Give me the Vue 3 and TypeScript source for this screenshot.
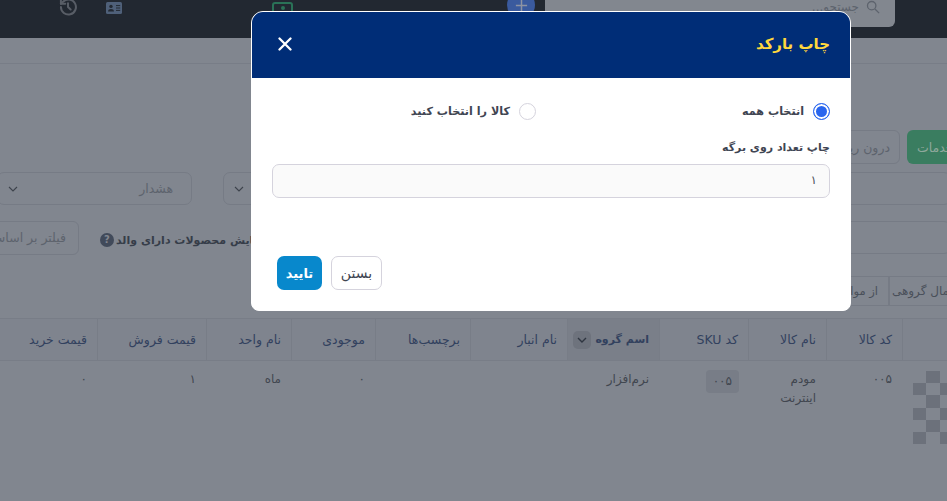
<script setup lang="ts">
interface Col { title: string; value?: string; sorted?: boolean }
const columns: Col[] = [
  { title: '' },
  { title: 'کد کالا', value: '۰۰۵' },
  { title: 'نام کالا', value: 'مودم اینترنت' },
  { title: 'کد SKU' },
  { title: 'اسم گروه', value: 'نرم‌افزار', sorted: true },
  { title: 'نام انبار' },
  { title: 'برچسب‌ها' },
  { title: 'موجودی', value: '۰' },
  { title: 'نام واحد', value: 'ماه' },
  { title: 'قیمت فروش', value: '۱' },
  { title: 'قیمت خرید', value: '۰' }
]
const checker: boolean[] = Array.from({ length: 24 }, (_, i) => (Math.floor(i / 4) + i % 4) % 2 === 1)
</script>

<template>
  <div class="page">
    <header class="topbar">
      <svg class="ico-history" viewBox="0 0 24 24" fill="none" stroke="#585d66" stroke-width="2.4" stroke-linecap="round" stroke-linejoin="round">
        <path d="M3.5 12a9 9 0 1 0 2.8-6.5L3.5 8.2" />
        <path d="M3.5 3v5.2h5.2" />
        <path d="M12 7.5V12l3.2 3" />
      </svg>
      <svg class="ico-card" viewBox="0 0 16 12">
        <rect width="16" height="12" rx="1.5" fill="#4f6079" />
        <circle cx="5" cy="4.4" r="1.7" fill="#232932" />
        <path d="M2 9.6c0-1.8 1.4-2.6 3-2.6s3 .8 3 2.6z" fill="#232932" />
        <path d="M10 3.6h4.2M10 6h4.2M10 8.4h4.2" stroke="#232932" stroke-width="1" />
      </svg>
      <span class="ico-green"><i></i></span>
      <span class="ico-plus">
        <svg viewBox="0 0 16 16" fill="none" stroke="#8d93a3" stroke-width="1.6"><path d="M8 2v12M2 8h12" /></svg>
      </span>
      <div class="search">
        <span class="search-text">جستجو...</span>
        <svg viewBox="0 0 16 16" fill="none" stroke="#5d636d" stroke-width="1.5"><circle cx="6.5" cy="6.5" r="4.8" /><path d="M10.2 10.2 15 15" /></svg>
      </div>
    </header>

    <div class="subbar"></div>

    <div class="tool-row first">
      <button class="ghost out">درون ریزی</button>
      <button class="green">خدمات</button>
    </div>

    <div class="tool-row second">
      <div class="select warn"><span>هشدار</span><svg viewBox="0 0 12 12"><path d="M2 4l4 4 4-4" /></svg></div>
      <div class="select other"><svg viewBox="0 0 12 12"><path d="M2 4l4 4 4-4" /></svg></div>
      <div class="field"></div>
    </div>

    <div class="tool-row third">
      <button class="ghost filter">فیلتر بر اساس</button>
      <span class="parent-help">?</span>
      <span class="parent-label">نمایش محصولات دارای والد</span>
      <div class="field"></div>
    </div>

    <div class="tabs">
      <span class="tab wide">اعمال گروهی</span>
      <span class="tab">از موارد انتخابی</span>
    </div>

    <div class="grid">
      <div v-for="(c, i) in columns" :key="'h' + i" class="th" :class="{ sorted: c.sorted }">
        <span>{{ c.title }}</span>
        <span v-if="c.sorted" class="sort"><svg viewBox="0 0 12 12"><path d="M2 4l4 4 4-4" /></svg></span>
      </div>
      <div v-for="(c, i) in columns" :key="'d' + i" class="td" :class="{ 'td-thumb': i === 0 }">
        <div v-if="i === 0" class="thumb"><i v-for="(on, k) in checker" :key="k" :class="{ on }"></i></div>
        <span v-else-if="c.title === 'کد SKU'" class="pill">۰۰۵</span>
        <span v-else>{{ c.value }}</span>
      </div>
    </div>

    <section class="modal" dir="rtl">
      <div class="modal-head">
        <h2>چاپ بارکد</h2>
        <svg class="close" viewBox="0 0 14 14" fill="none" stroke="#fff" stroke-width="2.3" stroke-linecap="round"><path d="M1.5 1.5l11 11M12.5 1.5l-11 11" /></svg>
      </div>
      <div class="modal-body">
        <div class="radios">
          <label class="radio"><span class="dot checked"></span>انتخاب همه</label>
          <label class="radio"><span class="dot"></span>کالا را انتخاب کنید</label>
        </div>
        <div class="label">چاپ تعداد روی برگه</div>
        <div class="input">۱</div>
      </div>
      <div class="modal-foot">
        <button class="ok">تایید</button>
        <button class="cancel">بستن</button>
      </div>
    </section>
  </div>
</template>

<style>
html, body { margin: 0; background: #81868f; }
</style>

<style scoped>
.page {
  position: relative;
  width: 947px;
  height: 501px;
  overflow: hidden;
  background: #81868f;
  font-family: "DejaVu Sans", sans-serif;
  color: #41464f;
}
.topbar {
  display: flex;
  align-items: flex-start;
  height: 51px;
  margin-top: -13px;
  background: #222831;
}
.ico-history { width: 20px; height: 20px; margin: 10px 0 0 58px; flex: none; }
.ico-card { width: 16px; height: 12px; margin: 15px 0 0 28px; flex: none; }
.ico-green {
  box-sizing: border-box;
  width: 21px;
  height: 30px;
  margin: 15px 0 0 150px;
  border: 2px solid #2a7257;
  border-radius: 3px;
  display: flex;
  justify-content: center;
  flex: none;
}
.ico-green i { width: 4px; height: 4px; margin-top: 2px; border-radius: 50%; background: #2a7257; }
.ico-plus {
  flex: none;
  width: 28px;
  height: 28px;
  margin: 4px 0 0 214px;
  border-radius: 50%;
  background: #3a5a9e;
  display: flex;
  align-items: center;
  justify-content: center;
}
.ico-plus svg { width: 15px; height: 15px; }
.search {
  box-sizing: border-box;
  flex: none;
  width: 350px;
  height: 40px;
  margin-left: 10px;
  background: #82878f;
  border-radius: 0 0 6px 6px;
  display: flex;
  align-items: center;
  justify-content: flex-end;
  padding-right: 15px;
  gap: 7px;
}
.search svg { width: 14px; height: 14px; }
.search-text { font-size: 12px; color: #5d636d; direction: rtl; }
.subbar { height: 25px; border-bottom: 1px solid #787d87; }
.tool-row { display: flex; align-items: center; }
.first { height: 34px; margin: 66px 0 0 836px; gap: 7px; width: 200px; }
button { font-family: inherit; box-sizing: border-box; flex: none; }
.ghost {
  height: 34px;
  border: 1px solid #767b85;
  border-radius: 6px;
  background: transparent;
  color: #5d636d;
  font-size: 12.5px;
  white-space: nowrap;
  padding: 0 9px;
  direction: rtl;
  text-align: right;
  overflow: hidden;
}
.out { width: 64px; }
.green {
  height: 34px;
  border: 0;
  border-radius: 6px;
  padding: 0 10px;
  background: #3a7d60;
  color: #8fa89c;
  font-size: 12.5px;
  direction: rtl;
}
.second { height: 33px; margin: 8px 0 0 -3px; }
.select {
  box-sizing: border-box;
  flex: none;
  height: 33px;
  border: 1px solid #767b85;
  border-radius: 7px;
  display: flex;
  align-items: center;
  justify-content: space-between;
  padding: 0 18px 0 9px;
  color: #5d636d;
  font-size: 12.5px;
  direction: rtl;
}
.select svg { width: 12px; height: 12px; fill: none; stroke: #3d434c; stroke-width: 1.1; margin-right: auto; }
.warn { width: 195px; margin-right: 31px; }
.other { width: 280px; margin-right: 20px; }
.field {
  box-sizing: border-box;
  height: 33px;
  flex: 1;
  margin-right: -4px;
  border: 1px solid #767b85;
  border-radius: 7px;
}
.third { height: 33px; margin: 16px 0 0 -30px; }
.filter { width: 109px; margin-right: 21px; padding-right: 12px; }
.parent-help {
  flex: none;
  width: 14px;
  height: 14px;
  margin-top: 5px;
  border-radius: 50%;
  background: #414a5a;
  color: #81868f;
  font-size: 10px;
  font-weight: 700;
  line-height: 14px;
  text-align: center;
}
.parent-label {
  flex: none;
  margin: 5px 100px 0 2px;
  font-size: 11px;
  font-weight: 700;
  color: #363d49;
  direction: rtl;
  white-space: nowrap;
}
.tabs {
  display: flex;
  flex-direction: row-reverse;
  height: 30px;
  margin: 22px -22px 0 0;
}
.tab {
  box-sizing: border-box;
  flex: none;
  height: 30px;
  padding: 0 10px;
  border: 1px solid #767b85;
  border-left-width: 0;
  font-size: 11.5px;
  line-height: 28px;
  white-space: nowrap;
  direction: rtl;
  overflow: hidden;
  width: 200px;
  text-align: right;
  color: #4a505a;
}
.tab.wide { width: 80px; border-left-width: 1px; padding: 0 8px; font-size: 12px; }
.grid {
  display: grid;
  direction: rtl;
  grid-template-columns: 45px 76px 78px 89px 92px 97px 95px 84px 85px 109px 137px;
  margin: 12px 0 0 -40px;
}
.th {
  box-sizing: border-box;
  height: 43px;
  padding: 0 10px;
  display: flex;
  align-items: center;
  gap: 4px;
  border-top: 1px solid #787d87;
  border-bottom: 1px solid #787d87;
  border-left: 1px solid #787d87;
  font-size: 12.5px;
  color: #32415e;
  background: #7f848e;
  white-space: nowrap;
}
.th.sorted { background: #7a7f89; font-weight: 700; font-size: 11px; }
.sort {
  flex: none;
  width: 18px;
  height: 18px;
  border-radius: 5px;
  background: #6e737d;
  display: flex;
  align-items: center;
  justify-content: center;
}
.sort svg { width: 12px; height: 12px; fill: none; stroke: #2f3641; stroke-width: 1.4; }
.td {
  box-sizing: border-box;
  height: 100px;
  padding: 9px 10px;
  font-size: 12px;
  line-height: 19px;
  color: #41464f;
}
.td-thumb { padding: 10px 0 0 11px; }
.thumb {
  display: grid;
  grid-template-columns: repeat(4, 13.4px);
  grid-auto-rows: 12.2px;
  direction: ltr;
}
.thumb i { background: transparent; }
.thumb i.on { background: #6c717b; }
.pill {
  display: inline-block;
  padding: 2px 7px;
  margin-right: -1px;
  border-radius: 4px;
  background: #787d87;
}
.modal {
  position: absolute;
  left: 251px;
  top: 11px;
  box-sizing: border-box;
  width: 600px;
  height: 300px;
  display: flex;
  flex-direction: column;
  background: #fff;
  border: 1px solid #fff;
  border-radius: 12px 12px 8px 8px;
  overflow: hidden;
  color: #3f4552;
}
.modal-head {
  height: 66px;
  flex: none;
  box-sizing: border-box;
  background: #002d77;
  display: flex;
  align-items: center;
  justify-content: space-between;
  padding: 0 20px 3px 26px;
}
.modal-head h2 { margin: 0; font-size: 15px; font-weight: 700; color: #ffd83d; }
.close { width: 14px; height: 14px; }
.modal-body { flex: 1; padding: 24px 20px 0; }
.radios { display: flex; height: 18px; }
.radio { flex: none; width: 294px; display: flex; align-items: center; gap: 9px; font-size: 11.2px; font-weight: 700; white-space: nowrap; }
.dot { box-sizing: border-box; flex: none; width: 17px; height: 17px; border: 1px solid #d5d3dd; border-radius: 50%; background: #fff; }
.dot.checked { border: 1px solid #2a66ee; background: #2a66ee; box-shadow: inset 0 0 0 2px #fff; }
.label { margin-top: 18px; font-size: 11px; font-weight: 700; line-height: 20px; }
.input {
  box-sizing: border-box;
  height: 34px;
  margin-top: 6px;
  padding: 0 12px;
  border: 1px solid #d5d3dd;
  border-radius: 7px;
  background: #fafafa;
  font-size: 12px;
  line-height: 30px;
  color: #50555f;
}
.modal-foot {
  flex: none;
  display: flex;
  gap: 9px;
  padding: 0 0 20px 25px;
  direction: ltr;
}
.ok {
  width: 45px;
  height: 34px;
  border: 0;
  border-radius: 7px;
  background: #0888cc;
  color: #fff;
  font-size: 13px;
  font-weight: 700;
}
.cancel {
  width: 51px;
  height: 34px;
  border: 1px solid #d5d3dd;
  border-radius: 7px;
  background: #fff;
  color: #3f4552;
  font-size: 14px;
}
</style>
